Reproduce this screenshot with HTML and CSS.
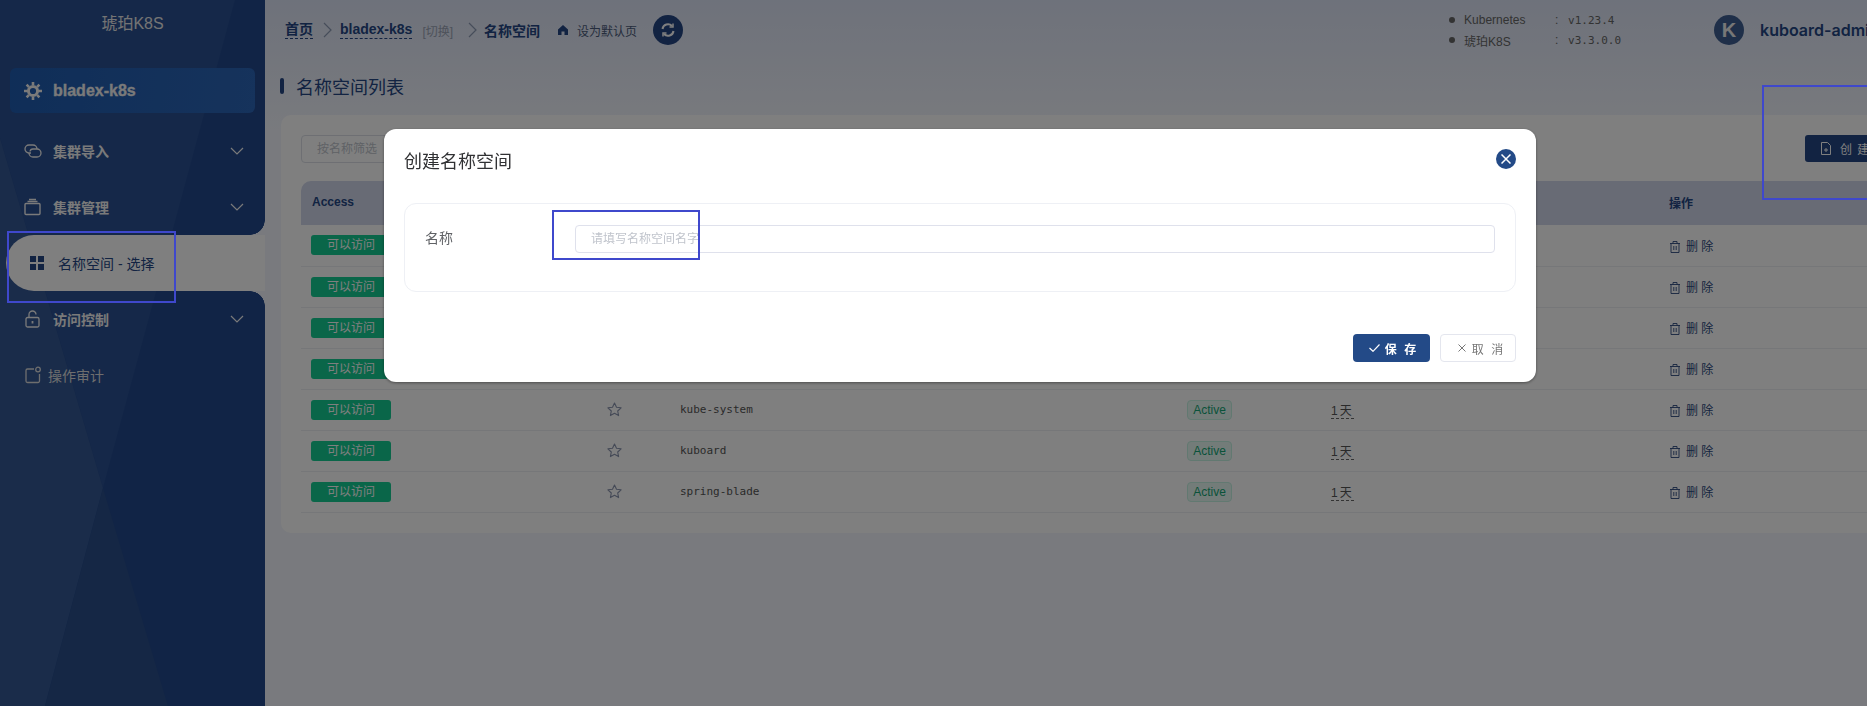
FILE: index.html
```html
<!DOCTYPE html>
<html>
<head>
  <title>名称空间列表</title>
  <link rel="stylesheet" href="styles.css">
</head>
<body>
  <div class="layout">
    <aside class="sidebar">
      <svg class="sidebar-facets" width="265" height="706" viewBox="0 0 265 706">
        <polygon points="0,0 235,0 103,488 0,138" fill="#2a5092"/>
        <polygon points="0,138 103,488 45,706 0,706" fill="#345894"/>
        <polygon points="103,488 168,706 45,706" fill="#2a4e8a"/>
      </svg>
      <div class="brand">琥珀K8S</div>
      <div class="cluster">
        <svg class="cluster-icon" width="18" height="18" viewBox="0 0 18 18">
          <circle cx="9" cy="9" r="4.6" fill="none" stroke="currentColor" stroke-width="3"/>
          <path d="M9 0v3M9 15v3M0 9h3M15 9h3M2.6 2.6l2.2 2.2M13.2 13.2l2.2 2.2M2.6 15.4l2.2-2.2M13.2 4.8l2.2-2.2" stroke="currentColor" stroke-width="2.6"/>
        </svg>
        <span>bladex-k8s</span>
      </div>
      <nav class="menu">
        <div class="menu-item">
          <svg class="menu-icon" width="18" height="18" viewBox="0 0 18 18" fill="none" stroke="currentColor" stroke-width="1.3">
            <path d="M7 11H5a4 4 0 0 1 0-8h4a4 4 0 0 1 4 4"/>
            <path d="M6 9.500a3 3 0 0 1 3-2.500h4a4 4 0 0 1 0 8H9a4 4 0 0 1-4-4"/>
          </svg>
          <span class="menu-label">集群导入</span>
          <svg class="menu-arrow" width="14" height="8" viewBox="0 0 14 8" fill="none" stroke="currentColor" stroke-width="1.2"><path d="M1 1l6 6 6-6"/></svg>
        </div>
        <div class="menu-item">
          <svg class="menu-icon" width="18" height="18" viewBox="0 0 18 18" fill="none" stroke="currentColor" stroke-width="1.4">
            <rect x="1" y="5.5" width="15" height="11" rx="1"/>
            <path d="M3.5 3.5h10M5 1.5h7"/>
          </svg>
          <span class="menu-label">集群管理</span>
          <svg class="menu-arrow" width="14" height="8" viewBox="0 0 14 8" fill="none" stroke="currentColor" stroke-width="1.2"><path d="M1 1l6 6 6-6"/></svg>
        </div>
        <div class="submenu-item">
          <svg class="grid-icon" width="14" height="14" viewBox="0 0 14 14" fill="currentColor">
            <rect width="6" height="6"/><rect x="8" width="6" height="6"/><rect y="8" width="6" height="6"/><rect x="8" y="8" width="6" height="6"/>
          </svg>
          <span>名称空间 - 选择</span>
        </div>
        <div class="menu-item">
          <svg class="menu-icon" width="18" height="18" viewBox="0 0 18 18" fill="none" stroke="currentColor" stroke-width="1.3">
            <rect x="2" y="7.5" width="13" height="9.5" rx="1.5"/>
            <path d="M5 7.5V4.5a3.5 3.5 0 0 1 7 0"/>
            <path d="M8.5 11v2.5" stroke-width="1.8"/>
          </svg>
          <span class="menu-label">访问控制</span>
          <svg class="menu-arrow" width="14" height="8" viewBox="0 0 14 8" fill="none" stroke="currentColor" stroke-width="1.2"><path d="M1 1l6 6 6-6"/></svg>
        </div>
        <div class="menu-item menu-item-plain">
          <svg class="menu-icon" width="18" height="18" viewBox="0 0 18 18" fill="none" stroke="currentColor" stroke-width="1.3">
            <path d="M10 3H3.5A1.5 1.5 0 0 0 2 4.500V15a1.500 1.500 0 0 0 1.500 1.500H14a1.500 1.500 0 0 0 1.500-1.500V8"/>
            <circle cx="14" cy="3.500" r="2.300"/>
          </svg>
          <span>操作审计</span>
        </div>
      </nav>
    </aside>

    <main class="main">
      <header class="topbar">
        <a class="crumb">首页</a>
        <svg class="crumb-sep" width="9" height="16" viewBox="0 0 9 16" fill="none" stroke="currentColor" stroke-width="1.200"><path d="M1 1l7 7-7 7"/></svg>
        <a class="crumb">bladex-k8s</a>
        <span class="crumb-switch">[切换]</span>
        <svg class="crumb-sep crumb-sep-wide" width="9" height="16" viewBox="0 0 9 16" fill="none" stroke="currentColor" stroke-width="1.200"><path d="M1 1l7 7-7 7"/></svg>
        <span class="crumb-current">名称空间</span>
        <svg class="home-icon" width="10" height="10" viewBox="0 0 10 10" fill="currentColor"><path d="M5 0L0 4.500V10h3.500V6.500h3V10H10V4.500z"/></svg>
        <span class="set-default">设为默认页</span>
        <span class="refresh">
          <svg width="14" height="14" viewBox="0 0 14 14" fill="none" stroke="currentColor" stroke-width="2">
            <path d="M1.500 6A5.500 5.500 0 0 1 11 3"/><path d="M12.500 8A5.500 5.500 0 0 1 3 11"/>
            <path d="M12 0.500V4H8.500M2 13.500V10h3.500" stroke-width="1.500"/>
          </svg>
        </span>
        <ul class="versions">
          <li><span class="version-name">Kubernetes</span><span class="version-colon">:</span><span class="version-value">v1.23.4</span></li>
          <li><span class="version-name">琥珀K8S</span><span class="version-colon">:</span><span class="version-value">v3.3.0.0</span></li>
        </ul>
        <div class="user">
          <span class="avatar">K</span>
          <span class="user-name">kuboard-admin</span>
        </div>
      </header>

      <h2 class="page-title">名称空间列表</h2>

      <section class="card">
        <div class="toolbar">
          <input class="filter" type="text" placeholder="按名称筛选">
          <button class="btn-create">
            <svg width="12" height="13" viewBox="0 0 12 13" fill="none" stroke="currentColor" stroke-width="1"><path d="M1.500 0.500h6l3 3v9h-9z"/><path d="M4 8h4M6 6v4"/></svg>
            创 建 名 称 空 间
          </button>
        </div>
        <table class="grid">
          <thead>
            <tr><th class="col-access">Access</th><th class="col-star"></th><th class="col-name">名称</th><th class="col-status">状态</th><th class="col-age">创建时间</th><th>操作</th></tr>
          </thead>
          <tbody id="rows"></tbody>
        </table>
      </section>
    </main>
  </div>

  <div class="mask"></div>

  <div class="dialog">
    <div class="dialog-head">
      <span class="dialog-title">创建名称空间</span>
      <span class="dialog-close">
        <svg width="10" height="10" viewBox="0 0 10 10" stroke="currentColor" stroke-width="1.500"><path d="M0.500 0.500l9 9M9.500 0.500l-9 9"/></svg>
      </span>
    </div>
    <div class="form-panel">
      <label class="form-label" for="ns-name">名称</label>
      <input class="form-input" id="ns-name" type="text" placeholder="请填写名称空间名字">
    </div>
    <div class="dialog-foot">
      <button class="btn-save">
        <svg width="11" height="8" viewBox="0 0 11 8" fill="none" stroke="currentColor" stroke-width="1.200"><path d="M0.500 4l3.500 3.300 6.500-6.800"/></svg>
        保 存
      </button>
      <button class="btn-cancel">
        <svg width="8" height="8" viewBox="0 0 8 8" stroke="currentColor" stroke-width="1"><path d="M0.500 0.500l7 7M7.500 0.500l-7 7"/></svg>
        取 消
      </button>
    </div>
  </div>

  <div class="mark mark-menu"></div>
  <div class="mark mark-input"></div>
  <div class="mark mark-create"></div>

  <script>
    const namespaces = ['default', 'kube-node-lease', 'kube-public', 'kube-flannel', 'kube-system', 'kuboard', 'spring-blade'];
    const star = '<svg width="15" height="15" viewBox="0 0 15 15" fill="none" stroke="currentColor" stroke-width="1.100" stroke-linejoin="round"><path d="M7.500 1l2 4.200 4.600.6-3.400 3.200.9 4.600-4.100-2.300-4.100 2.300.9-4.600L.9 5.800l4.600-.6z"/></svg>';
    const trash = '<svg width="10" height="12" viewBox="0 0 10 12" fill="none" stroke="currentColor" stroke-width=".9"><path d="M0 2.500h10M3 2.500V.5h4v2M1 2.500v9h8v-9M3.800 5v4M6.200 5v4"/></svg>';

    document.getElementById('rows').innerHTML = namespaces.map(name => `
      <tr>
        <td><span class="access">可以访问</span></td>
        <td class="star">${star}</td>
        <td class="ns-name">${name}</td>
        <td><span class="status">Active</span></td>
        <td><span class="age">1天</span></td>
        <td class="ops">${trash}<span>删 除</span></td>
      </tr>`).join('');
  </script>
</body>
</html>
```

FILE: styles.css
```css
* {
  box-sizing: border-box;
}

html, body {
  margin: 0;
  height: 100%;
  overflow: hidden;
}

body {
  font-family: "Liberation Sans", "Noto Sans CJK SC", sans-serif;
  font-size: 12px;
  color: #333;
  background-color: #f9fafc;
}

.layout {
  display: flex;
  height: 706px;
  width: 1867px;
  overflow: hidden;
}

/* Sidebar */
.sidebar {
  position: relative;
  flex: none;
  width: 265px;
  background-color: #22488c;
  color: #f4f4f4;
  overflow: hidden;
}

.sidebar-facets {
  position: absolute;
  top: 0;
  left: 0;
}

.brand, .cluster, .menu {
  position: relative;
}

.brand {
  height: 68px;
  padding-top: 12px;
  text-align: center;
  font-size: 16px;
  line-height: 24px;
  color: #e8e8e8;
}

.cluster {
  display: flex;
  align-items: center;
  gap: 11px;
  height: 45px;
  margin: 0 10px;
  padding-left: 14px;
  border-radius: 6px;
  background: linear-gradient(100deg, #1f5cb0, #2c66b8);
  font-size: 16px;
  font-weight: bold;
  -webkit-text-stroke: .3px;
}

.menu {
  margin-top: 10px;
}

.menu-item {
  display: flex;
  align-items: center;
  height: 56px;
  padding: 0 21px 0 24px;
  font-size: 14px;
}

.menu-item-plain {
  color: #ddd;
}

.menu-item-plain .menu-icon {
  margin-right: 6px;
}

.menu-icon {
  flex: none;
  margin-right: 11px;
}

.menu-label {
  flex: 1;
  font-weight: bold;
}

.menu-arrow {
  flex: none;
}

.submenu-item {
  position: relative;
  display: flex;
  align-items: center;
  gap: 14px;
  height: 56px;
  margin-left: 6px;
  padding-left: 24px;
  border-radius: 28px 0 0 28px;
  background-color: #fff;
  color: #244684;
  font-size: 14px;
}

/* concave corners joining the selected row to the content area */
.submenu-item::before, .submenu-item::after {
  content: "";
  position: absolute;
  right: 0;
  width: 15px;
  height: 15px;
}

.submenu-item::before {
  top: -15px;
  background: radial-gradient(circle at 0 0, transparent 14.5px, #f2f5fc 15px);
}

.submenu-item::after {
  bottom: -15px;
  background: radial-gradient(circle at 0 100%, transparent 14.5px, #f2f5fc 15px);
}

/* Top bar */
.main {
  flex: none;
  width: 1700px;
  padding-left: 16px;
  background: linear-gradient(#dde4f6, #f2f5fc 130px);
}

.topbar {
  display: flex;
  align-items: center;
  height: 60px;
  padding-left: 4px;
  color: #244684;
  white-space: nowrap;
}

.topbar > * {
  flex: none;
}

.crumb {
  font-size: 14px;
  font-weight: bold;
  line-height: 17px;
  border-bottom: 1px dashed #244684;
}

.crumb-sep {
  margin: 0 8px 0 10px;
  color: #8d9ab4;
}

.crumb-sep-wide {
  margin: 0 7px 0 15px;
}

.crumb-switch {
  margin-left: 10px;
  color: #9aa3b5;
}

.crumb-current {
  font-size: 14px;
  font-weight: bold;
}

.home-icon {
  margin-left: 18px;
}

.set-default {
  margin-left: 9px;
  color: #4a5a7a;
}

.refresh {
  display: flex;
  align-items: center;
  justify-content: center;
  width: 30px;
  height: 30px;
  margin-left: 16px;
  border-radius: 50%;
  background-color: #244684;
  color: #fff;
}

.versions {
  margin: 0 0 0 766px;
  padding: 0;
  list-style: none;
  color: #666;
}

.versions li {
  display: flex;
  align-items: center;
  height: 20px;
}

.versions li::before {
  content: "";
  width: 6px;
  height: 6px;
  margin-right: 9px;
  border-radius: 50%;
  background-color: #666;
}

.version-name {
  width: 91px;
}

.version-colon {
  width: 13px;
}

.version-value {
  font-family: "DejaVu Sans Mono", monospace;
  font-size: 11px;
}

.user {
  display: flex;
  align-items: center;
  gap: 16px;
  margin-left: 93px;
}

.avatar {
  display: flex;
  align-items: center;
  justify-content: center;
  width: 30px;
  height: 30px;
  border-radius: 50%;
  background-color: #3e5f92;
  color: #eee;
  font-size: 20px;
  font-weight: bold;
}

.user-name {
  font-family: Inter, sans-serif;
  font-size: 16px;
  font-weight: 600;
  color: #244684;
  white-space: nowrap;
}

/* Page body */
.page-title {
  display: flex;
  align-items: center;
  gap: 12px;
  height: 32px;
  margin: 10px 0 13px;
  font-size: 18px;
  font-weight: normal;
  color: #244684;
}

.page-title::before {
  content: "";
  width: 4px;
  height: 16px;
  margin-left: -1px;
  border-radius: 2px;
  background-color: #244684;
}

.card {
  width: 1680px;
  height: 418px;
  padding: 20px;
  border-radius: 10px;
  background-color: #fff;
}

.toolbar {
  display: flex;
  justify-content: space-between;
  height: 28px;
  margin-bottom: 18px;
}

.filter {
  width: 200px;
  height: 28px;
  padding: 0 15px;
  border: 1px solid #dcdfe6;
  border-radius: 4px;
  font: inherit;
}

.filter::placeholder, .form-input::placeholder {
  color: #c0c4cc;
}

.btn-create {
  display: flex;
  align-items: center;
  gap: 8px;
  width: 136px;
  height: 27px;
  margin-left: auto;
  padding: 0 0 0 15px;
  border: none;
  border-radius: 3px;
  background-color: #244684;
  color: #fff;
  font: inherit;
  letter-spacing: 1px;
  white-space: nowrap;
}

.grid {
  width: 100%;
  border-collapse: collapse;
  table-layout: fixed;
}

.grid th {
  height: 44px;
  padding: 0 0 2px 11px;
  background-color: #d0d6ea;
  color: #244684;
  font-size: 12px;
  text-align: left;
}

.grid th:first-child {
  border-top-left-radius: 10px;
}

.col-access { width: 295px; }
.col-star { width: 74px; }
.col-name { width: 507px; }
.col-status { width: 144px; }
.col-age { width: 337px; }

.grid td {
  height: 41px;
  padding: 0 0 0 10px;
  border-bottom: 1px solid #eceef2;
  vertical-align: middle;
}

.access {
  display: inline-block;
  width: 80px;
  height: 20px;
  border-radius: 3px;
  background-color: #14cc92;
  color: #fff;
  line-height: 20px;
  text-align: center;
}

.star {
  color: #8a94ae;
}

.star svg {
  display: block;
  margin-left: 1px;
}

.ns-name {
  font-family: "DejaVu Sans Mono", monospace;
  font-size: 11px;
  color: #555;
}

.status {
  display: inline-block;
  width: 45px;
  height: 20px;
  border: 1px solid #c4f2e2;
  border-radius: 4px;
  background-color: #e6f9f2;
  color: #14a574;
  line-height: 18px;
  text-align: center;
}

.age {
  border-bottom: 1px dashed #666;
  color: #555;
  letter-spacing: 2px;
}

.grid .ops {
  padding-left: 12px;
  color: #2c4a80;
}

.ops svg {
  margin-right: 6px;
  vertical-align: -2px;
}

/* Dialog */
.mask {
  position: fixed;
  top: 0;
  left: 0;
  right: 0;
  bottom: 0;
  background-color: rgba(0, 0, 0, .5);
}

.dialog {
  position: fixed;
  top: 129px;
  left: 384px;
  width: 1152px;
  height: 253px;
  padding: 0 20px;
  border-radius: 12px;
  background-color: #fff;
  box-shadow: 0 1px 3px rgba(0, 0, 0, .4);
}

.dialog-head {
  display: flex;
  align-items: center;
  justify-content: space-between;
  height: 74px;
  padding: 0 0 13px;
}

.dialog-title {
  font-size: 18px;
  color: #303133;
}

.dialog-close {
  display: flex;
  align-items: center;
  justify-content: center;
  width: 20px;
  height: 20px;
  margin-top: -1px;
  border-radius: 50%;
  background-color: #234a87;
  color: #fff;
}

.form-panel {
  display: flex;
  align-items: flex-start;
  height: 89px;
  padding: 21px 20px 0 20px;
  border: 1px solid #eef0f5;
  border-radius: 12px;
}

.form-label {
  width: 150px;
  font-size: 14px;
  line-height: 26px;
  color: #606266;
}

.form-input {
  flex: 1;
  height: 28px;
  padding: 0 15px;
  border: 1px solid #dfe1ec;
  border-radius: 4px;
  font: inherit;
}

.dialog-foot {
  display: flex;
  justify-content: flex-end;
  gap: 10px;
  margin-top: 42px;
}

.btn-save, .btn-cancel {
  display: flex;
  align-items: center;
  justify-content: center;
  width: 76px;
  height: 28px;
  border-radius: 4px;
  font: inherit;
  letter-spacing: 2px;
}

.btn-save {
  gap: 5px;
  width: 77px;
  padding: 0 0 0 4px;
  border: none;
  background-color: #234a87;
  color: #fff;
  font-weight: bold;
}

.btn-cancel {
  gap: 6px;
  padding: 0 0 0 7px;
  border: 1px solid #e4e6ee;
  background-color: #fff;
  color: #777;
}

/* Outlines drawn over the page */
.mark {
  position: fixed;
  border: 2px solid #3f48cc;
}

.mark-menu {
  top: 231px;
  left: 7px;
  width: 169px;
  height: 72px;
}

.mark-input {
  top: 210px;
  left: 552px;
  width: 148px;
  height: 50px;
}

.mark-create {
  top: 85px;
  left: 1762px;
  width: 140px;
  height: 115px;
}
```
